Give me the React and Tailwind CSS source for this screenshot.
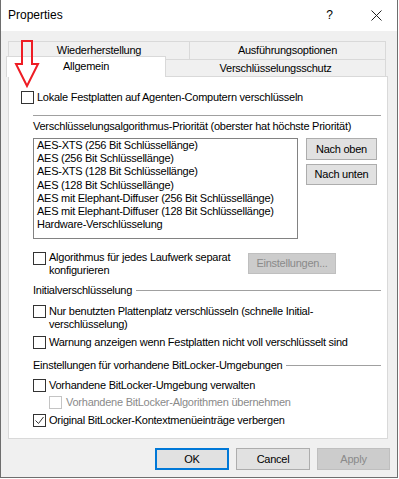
import React from "react";

const Box = ({ checked, disabled }) => (
  <span
    className={`shrink-0 w-[13px] h-[13px] border bg-white flex items-center justify-center ${
      disabled ? "border-[#c4c4c4]" : "border-[#333333]"
    }`}
  >
    {checked && (
      <svg width="11" height="11" viewBox="0 0 11 11">
        <path d="M1.5 5.5 L4.5 8.5 L9.5 2" fill="none" stroke="#333333" strokeWidth="1" />
      </svg>
    )}
  </span>
);

const Button = ({ children, className = "" }) => (
  <div className={`flex items-center justify-center bg-[#e1e1e1] border border-[#adadad] ${className}`}>
    {children}
  </div>
);

const algorithms = [
  "AES-XTS (256 Bit Schlüssellänge)",
  "AES (256 Bit Schlüssellänge)",
  "AES-XTS (128 Bit Schlüssellänge)",
  "AES (128 Bit Schlüssellänge)",
  "AES mit Elephant-Diffuser (256 Bit Schlüssellänge)",
  "AES mit Elephant-Diffuser (128 Bit Schlüssellänge)",
  "Hardware-Verschlüsselung",
];

const App = () => {
  return (
    <div className="relative w-[399px] h-[479px] bg-white text-black text-[11px] leading-[13px] font-['Liberation_Sans',Arial,sans-serif]">
      <div className="w-[398px] h-[478px] border-x border-b border-[#6e6e6e] bg-[#f0f0f0] flex flex-col">
        {/* Title bar */}
        <div className="h-[31px] shrink-0 bg-white flex items-center pl-[7px] pr-[15px] text-[12px]">
          <span>Properties</span>
          <span className="ml-auto">?</span>
          <svg className="ml-[38px]" width="11" height="11" viewBox="0 0 11 11">
            <path d="M0.5 0.5 L10.5 10.5 M10.5 0.5 L0.5 10.5" stroke="#222" strokeWidth="1" />
          </svg>
        </div>

        <div className="flex flex-col tracking-[-0.25px]">
          {/* Tabs */}
          <div className="pt-[10px] pl-[7px]">
            <div className="flex h-[18px]">
              <div className="w-[182px] border-t border-x border-[#d9d9d9] flex items-center justify-center">
                Wiederherstellung
              </div>
              <div className="w-[196px] border-t border-r border-[#d9d9d9] flex items-center justify-center">
                Ausführungsoptionen
              </div>
            </div>
            <div className="flex h-[17px] items-start">
              <div className="relative z-10 -ml-[2px] -mt-[3px] h-[21px] w-[160px] bg-white border-t border-x border-[#d9d9d9] flex items-center justify-center pb-[1px]">
                Allgemein
              </div>
              <div className="w-[220px] h-[17px] border-t border-r border-[#d9d9d9] flex items-center justify-center">
                Verschlüsselungsschutz
              </div>
            </div>

            {/* Panel */}
            <div className="w-[380px] h-[363px] bg-white border border-[#d9d9d9] flex flex-col">
              <div className="mt-[14px] pl-[12px] flex items-center gap-[3px] h-[13px]">
                <Box />
                <span>Lokale Festplatten auf Agenten-Computern verschlüsseln</span>
              </div>

              <div className="pl-[24px] pr-[6px] flex flex-col">
                <div className="mt-[11px] h-px bg-[#a0a0a0]" />
                <div className="mt-[4px]">Verschlüsselungsalgorithmus-Priorität (oberster hat höchste Priorität)</div>

                <div className="mt-[5px] flex gap-[8px]">
                  <div className="w-[265px] h-[101px] border border-[#828282] pl-[3px] leading-[13.2px]">
                    {algorithms.map((a) => (
                      <div key={a}>{a}</div>
                    ))}
                  </div>
                  <div className="flex flex-col gap-[4px]">
                    <Button className="w-[71px] h-[22px]">Nach oben</Button>
                    <Button className="w-[71px] h-[21px]">Nach unten</Button>
                  </div>
                </div>

                <div className="mt-[12px] flex items-start">
                  <span className="mt-[1px]">
                    <Box />
                  </span>
                  <div className="ml-[3px] w-[199px]">
                    Algorithmus für jedes Laufwerk separat
                    <br />
                    konfigurieren
                  </div>
                  <div className="mt-[2px] w-[88px] h-[21px] bg-[#cccccc] border border-[#bfbfbf] text-[#8a8a8a] flex items-center justify-center">
                    Einstellungen...
                  </div>
                </div>

                <div className="mt-[7px] flex items-center h-[13px]">
                  <span>Initialverschlüsselung</span>
                  <div className="ml-[4px] flex-1 h-px bg-[#a0a0a0]" />
                </div>

                <div className="mt-[8px] flex items-start gap-[3px]">
                  <Box />
                  <div>
                    Nur benutzten Plattenplatz verschlüsseln (schnelle Initial-
                    <br />
                    verschlüsselung)
                  </div>
                </div>

                <div className="mt-[5px] flex items-center gap-[3px] h-[13px]">
                  <Box />
                  <span>Warnung anzeigen wenn Festplatten nicht voll verschlüsselt sind</span>
                </div>

                <div className="mt-[10px] flex items-center h-[13px]">
                  <span>Einstellungen für vorhandene BitLocker-Umgebungen</span>
                  <div className="ml-[4px] flex-1 h-px bg-[#a0a0a0]" />
                </div>

                <div className="mt-[7px] flex items-center gap-[3px] h-[13px]">
                  <Box />
                  <span>Vorhandene BitLocker-Umgebung verwalten</span>
                </div>

                <div className="mt-[4px] pl-[16px] flex items-center gap-[4px] h-[13px] text-[#8a8a8a]">
                  <Box disabled />
                  <span>Vorhandene BitLocker-Algorithmen übernehmen</span>
                </div>

                <div className="mt-[5px] flex items-center gap-[3px] h-[13px]">
                  <Box checked />
                  <span>Original BitLocker-Kontextmenüeinträge verbergen</span>
                </div>
              </div>
            </div>
          </div>

          {/* Dialog buttons */}
          <div className="mt-[9px] flex justify-end gap-[7px] pr-[7px]">
            <div className="w-[74px] h-[22px] bg-[#e1e1e1] border-2 border-[#0078d7] flex items-center justify-center">
              OK
            </div>
            <Button className="w-[74px] h-[22px]">Cancel</Button>
            <div className="w-[73px] h-[22px] bg-[#cccccc] border border-[#bfbfbf] text-[#8a8a8a] flex items-center justify-center">
              Apply
            </div>
          </div>
        </div>
      </div>

      {/* Red annotation arrow */}
      <svg className="absolute left-[14px] top-[38px] z-20" width="28" height="52" viewBox="0 0 28 52">
        <polygon
          points="8,3 18,3 18,26 24,26 13,48 2,26 8,26"
          fill="none"
          stroke="#ee1c24"
          strokeWidth="2"
          strokeLinejoin="miter"
        />
      </svg>
    </div>
  );
};

export default App;
